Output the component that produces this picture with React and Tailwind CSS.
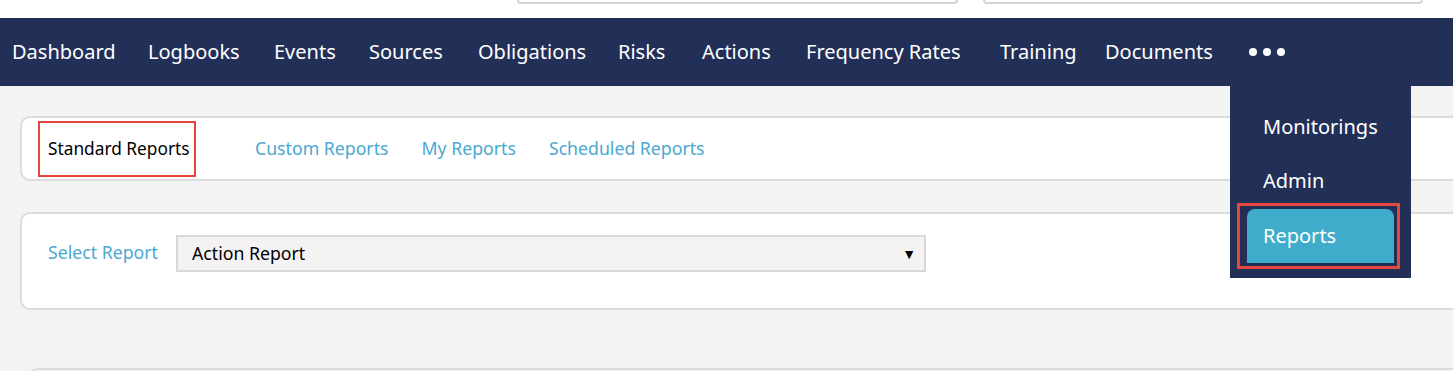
const navItems = [
  { label: 'Dashboard', w: 'w-[136px]' },
  { label: 'Logbooks', w: 'w-[126px]' },
  { label: 'Events', w: 'w-[95px]' },
  { label: 'Sources', w: 'w-[109px]' },
  { label: 'Obligations', w: 'w-[140px]' },
  { label: 'Risks', w: 'w-[84px]' },
  { label: 'Actions', w: 'w-[104px]' },
  { label: 'Frequency Rates', w: 'w-[194px]' },
  { label: 'Training', w: 'w-[105px]' },
  { label: 'Documents', w: 'w-[144px]' },
];

const tabs = ['Custom Reports', 'My Reports', 'Scheduled Reports'];

const App = () => {
  return (
    <div className="relative min-h-[371px] overflow-hidden bg-[#f4f3f4] font-['Noto_Sans',sans-serif]">
      {/* top strip with search inputs (cut off) */}
      <div className="flex h-[18px] justify-end gap-[25px] bg-white pr-[30px]">
        <div className="h-[4px] w-[441px] rounded-b-lg border-x-2 border-b-2 border-[#d4d4d4]" />
        <div className="h-[4px] w-[440px] rounded-b-lg border-x-2 border-b-2 border-[#d4d4d4]" />
      </div>

      {/* main nav */}
      <nav className="flex h-[68px] items-center bg-[#223058] pl-3 text-[20px] text-white">
        {navItems.map((item) => (
          <span key={item.label} className={`${item.w} shrink-0 whitespace-nowrap leading-none`}>
            {item.label}
          </span>
        ))}
        <span className="flex gap-[6px]">
          <span className="h-2 w-2 rounded-full bg-white" />
          <span className="h-2 w-2 rounded-full bg-white" />
          <span className="h-2 w-2 rounded-full bg-white" />
        </span>
      </nav>

      <div className="pl-5 pt-[30px]">
        {/* report tabs */}
        <div className="flex h-[65px] items-center rounded-l-[10px] border-2 border-r-0 border-[#dcdcdc] bg-white pl-[16px] text-[17.7px]">
          <div className="flex h-[56px] w-[158px] items-center whitespace-nowrap border-2 border-[#e5473f] pl-[8px] text-[17.3px] text-black">
            Standard Reports
          </div>
          <div className="ml-[59px] flex gap-[33px] text-[#4aa9d0]">
            {tabs.map((t) => (
              <span key={t}>{t}</span>
            ))}
          </div>
        </div>

        {/* select report card */}
        <div className="mt-[31px] flex h-[98px] items-start rounded-l-[10px] border-2 border-r-0 border-[#dcdcdc] bg-white pl-[26px] pt-[21px] text-[17.7px]">
          <span className="mt-[4px] w-[128px] text-[#4aa9d0]">Select Report</span>
          <div className="flex h-[37px] w-[750px] items-center justify-between border-2 border-[#d8d8d8] bg-[#f4f2f3] pl-[14px] pr-[8px] text-black">
            <span>Action Report</span>
            <span className="text-[14px]">▼</span>
          </div>
        </div>

        <div className="ml-2 mt-[58px] h-[20px] rounded-tl-[10px] border-l-2 border-t-2 border-[#dcdcdc]" />
      </div>

      {/* overflow menu */}
      <div className="absolute left-[1230px] top-[86px] flex h-[192px] w-[181px] flex-col bg-[#223058] pl-[7px] pr-[11px] pt-[14px] text-[20px] text-white">
        <div className="flex h-[54px] items-center pl-[26px]">Monitorings</div>
        <div className="flex h-[49px] items-center pl-[26px] pt-[5px]">Admin</div>
        <div className="border-[3px] border-[#e5473f] py-[3px] pl-[7px] pr-[3px]">
          <div className="flex h-[54px] items-center rounded-t-lg bg-[#3eacca] pl-[16px]">Reports</div>
        </div>
      </div>
    </div>
  );
};

export default App;
